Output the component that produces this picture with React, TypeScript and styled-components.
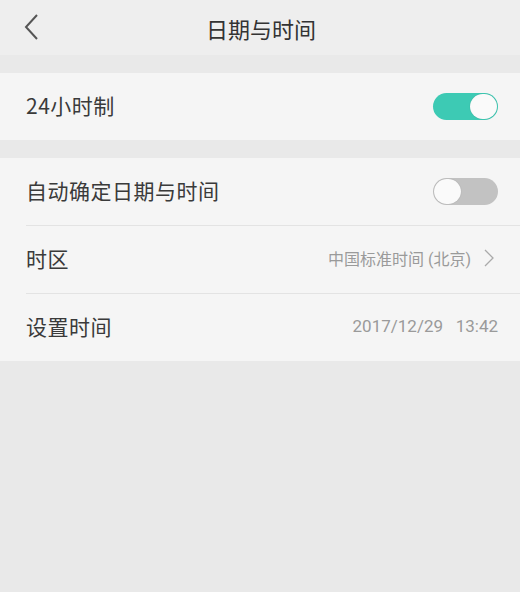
import React, { useState } from 'react';
import styled, { createGlobalStyle } from 'styled-components';

const GlobalStyle = createGlobalStyle`
    html, body {
        margin: 0;
        padding: 0;
        background: #e9e9e9;
        font-family: "Noto Sans CJK SC", "Liberation Sans", sans-serif;
    }
`;

const Page = styled.div`
    width: 520px;
    min-height: 592px;
    background: #e9e9e9;
    display: flex;
    flex-direction: column;
`;

const Header = styled.div`
    height: 55px;
    background: #eeeeee;
    display: flex;
    align-items: center;
    justify-content: center;
    position: relative;
`;

const Back = styled.div`
    position: absolute;
    left: 22px;
    top: 13px;
    width: 20px;
    height: 28px;
`;

const Title = styled.div`
    font-size: 22px;
    line-height: 1;
    margin-left: 2px;
    color: #333;
`;

const Section = styled.div`
    margin-top: 18px;
    background: #f5f5f5;
`;

const Row = styled.div<{ $divider?: boolean }>`
    height: 67px;
    margin-left: 26px;
    padding-right: 22px;
    display: flex;
    align-items: center;
    justify-content: space-between;
    border-top: ${(p) => (p.$divider ? '1px solid #e3e3e3' : 'none')};
`;

const Label = styled.div`
    font-size: 21px;
    line-height: 1;
    margin-top: -3px;
    letter-spacing: 0.5px;
    color: #3a3a3a;
`;

const Value = styled.div<{ $size?: number }>`
    font-size: ${(p) => p.$size ?? 16}px;
    font-family: "Roboto", "Noto Sans CJK SC", sans-serif;
    color: #9a9a9a;
    display: flex;
    align-items: center;
    gap: 13px;
    margin-top: -3px;
    white-space: pre;
`;

const Chevron = styled.svg`
    margin-right: 4px;
`;

const Track = styled.div<{ $on: boolean }>`
    width: 65px;
    height: 27px;
    border-radius: 14px;
    background: ${(p) => (p.$on ? '#3dcab4' : '#c2c2c2')};
    position: relative;
    cursor: pointer;
`;

const Knob = styled.div<{ $on: boolean }>`
    position: absolute;
    top: 1px;
    left: ${(p) => (p.$on ? '37px' : '1px')};
    width: 27px;
    height: 25px;
    border-radius: 13px;
    background: #fafafa;
    box-shadow: 0 0 1px rgba(0, 0, 0, 0.25);
`;

const Toggle: React.FC<{ on: boolean; onChange: () => void }> = ({ on, onChange }) => (
    <Track $on={on} onClick={onChange}>
        <Knob $on={on} />
    </Track>
);

export default function App() {
    const [h24, setH24] = useState(true);
    const [auto, setAuto] = useState(false);
    return (
        <>
            <GlobalStyle />
            <Page>
                <Header>
                    <Back>
                        <svg width="20" height="28" viewBox="0 0 20 28">
                            <path d="M15 2 L4 14 L15 26" fill="none" stroke="#555" strokeWidth="2" />
                        </svg>
                    </Back>
                    <Title>日期与时间</Title>
                </Header>
                <Section>
                    <Row>
                        <Label>24小时制</Label>
                        <Toggle on={h24} onChange={() => setH24(!h24)} />
                    </Row>
                </Section>
                <Section>
                    <Row>
                        <Label>自动确定日期与时间</Label>
                        <Toggle on={auto} onChange={() => setAuto(!auto)} />
                    </Row>
                    <Row $divider>
                        <Label>时区</Label>
                        <Value>
                            中国标准时间 (北京)
                            <Chevron width="10" height="18" viewBox="0 0 10 18">
                                <path d="M1 1 L9 9 L1 17" fill="none" stroke="#aaa" strokeWidth="1.3" />
                            </Chevron>
                        </Value>
                    </Row>
                    <Row $divider>
                        <Label>设置时间</Label>
                        <Value $size={17}>{'2017/12/29   13:42'}</Value>
                    </Row>
                </Section>
            </Page>
        </>
    );
}
